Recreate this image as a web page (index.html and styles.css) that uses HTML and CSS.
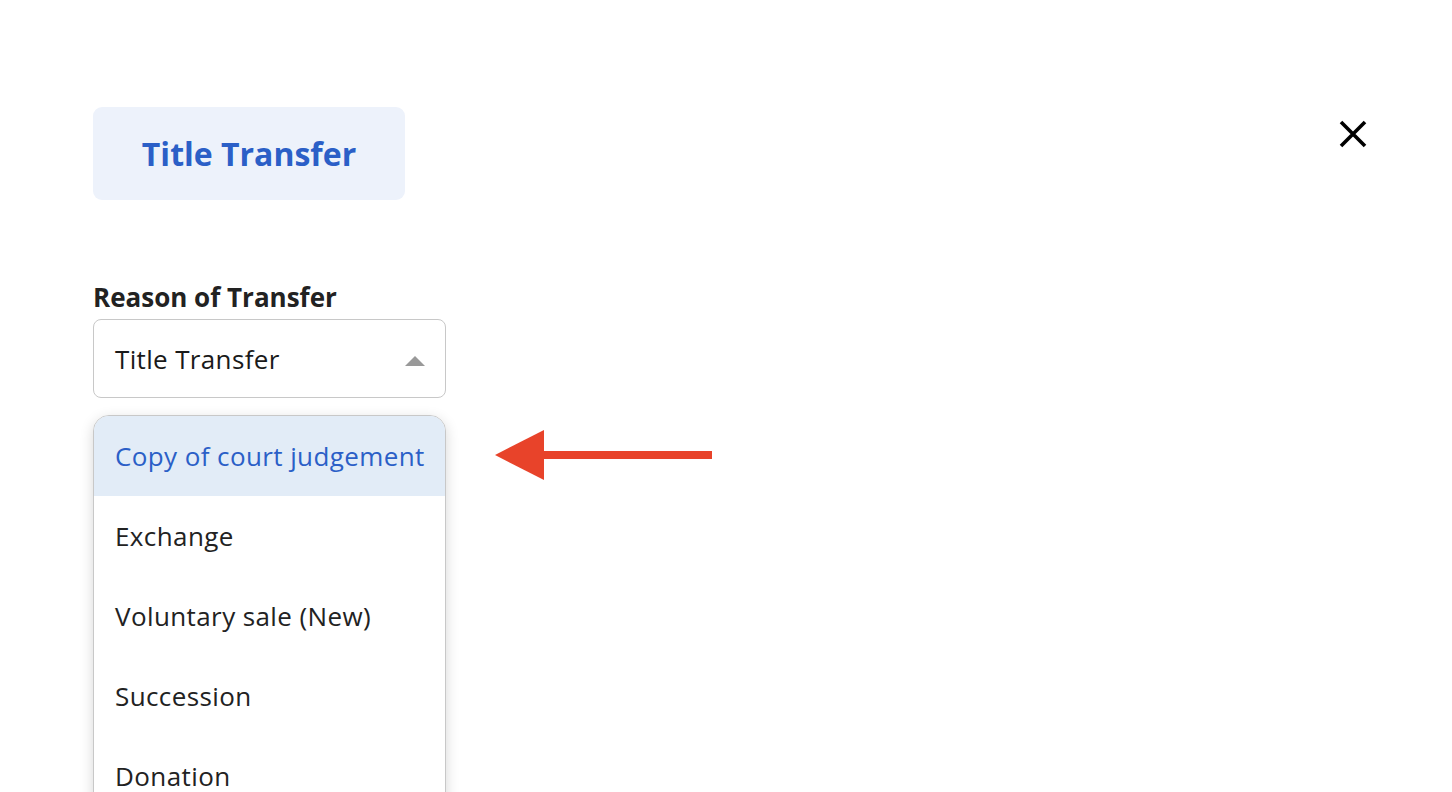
FILE: index.html
```html
<!DOCTYPE html>
<html lang="en">
<head>
    <meta charset="UTF-8">
    <meta name="viewport" content="width=device-width, initial-scale=1.0">
    <title>Title Transfer</title>
    <link rel="stylesheet" href="styles.css">
</head>
<body>
    <div class="page">
        <div class="header">
            <div class="badge">Title Transfer</div>
            <div class="close">
                <svg width="28" height="28" viewBox="0 0 28 28">
                    <path d="M2 2 L26 26 M26 2 L2 26" stroke="#000" stroke-width="3.6" fill="none"/>
                </svg>
            </div>
        </div>

        <div class="field">
            <div class="label">Reason of Transfer</div>
            <div class="select">
                <span>Title Transfer</span>
                <span class="caret"></span>
            </div>

            <div class="menu-wrap">
                <ul class="menu">
                    <li class="active">Copy of court judgement</li>
                    <li>Exchange</li>
                    <li>Voluntary sale (New)</li>
                    <li>Succession</li>
                    <li>Donation</li>
                </ul>

                <!-- annotation arrow -->
                <svg class="pointer" width="220" height="52" viewBox="0 0 220 52">
                    <rect x="46" y="22" width="171" height="8" fill="#e8432a"/>
                    <polygon points="0,26 49,1 49,51" fill="#e8432a"/>
                </svg>
            </div>
        </div>
    </div>
</body>
</html>
```

FILE: styles.css
```css
html, body {
    margin: 0;
    padding: 0;
    height: 100%;
    overflow: hidden;
    background-color: white;
}

body {
    font-family: "Open Sans", "Noto Sans", sans-serif;
    color: #222;
}

.page {
    padding: 107px 85px 0 93px;
}

.header {
    display: flex;
    justify-content: space-between;
    align-items: flex-start;
}

.badge {
    width: 312px;
    height: 93px;
    display: flex;
    align-items: center;
    justify-content: center;
    background-color: #edf2fb;
    border-radius: 9px;
    color: #2b5fc7;
    font-size: 32px;
    font-weight: 700;
}

.close {
    margin-top: 13px;
    width: 28px;
    height: 28px;
}

.field {
    margin-top: 79px;
    width: 353px;
}

.label {
    font-size: 26px;
    font-weight: 700;
    line-height: 36px;
    color: #222;
}

.select {
    margin-top: 4px;
    height: 79px;
    box-sizing: border-box;
    border: 1.5px solid #c8c8c8;
    border-radius: 8px;
    display: flex;
    align-items: center;
    justify-content: space-between;
    padding: 0 20px 0 21px;
    font-size: 26px;
    letter-spacing: 0.35px;
    color: #1a1a1a;
}

.caret {
    width: 0;
    height: 0;
    border-left: 10px solid transparent;
    border-right: 10px solid transparent;
    border-bottom: 10px solid #999;
    margin-top: 4px;
}

.menu-wrap {
    position: relative;
    margin-top: 17px;
}

.menu {
    list-style: none;
    margin: 0;
    padding: 0;
    border: 1.5px solid #c8c8c8;
    border-radius: 16px;
    overflow: hidden;
    box-shadow: 0 4px 14px rgba(0, 0, 0, 0.16);
    background: white;
}

.menu li {
    height: 80px;
    display: flex;
    align-items: center;
    padding-left: 21px;
    font-size: 26px;
    letter-spacing: 0.4px;
    color: #222;
}

.menu li.active {
    background-color: #e2ecf7;
    color: #2b5fc7;
}

.pointer {
    position: absolute;
    left: 402px;
    top: 14px;
}
```
